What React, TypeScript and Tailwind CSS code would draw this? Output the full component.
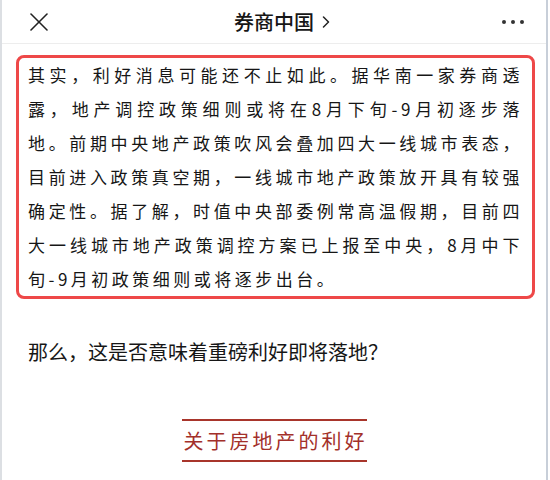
import React from 'react';

const boxLines = [
  '其实，利好消息可能还不止如此。据华南一家券商透',
  '露，地产调控政策细则或将在8月下旬-9月初逐步落',
  '地。前期中央地产政策吹风会叠加四大一线城市表态，',
  '目前进入政策真空期，一线城市地产政策放开具有较强',
  '确定性。据了解，时值中央部委例常高温假期，目前四',
  '大一线城市地产政策调控方案已上报至中央，8月中下',
];
const lastLine = '旬-9月初政策细则或将逐步出台。';

const cjk = { fontFamily: '"Noto Sans CJK SC", "Noto Sans", sans-serif' };

const App: React.FC = () => {
  return (
    <div className="w-[550px] h-[480px] bg-white flex overflow-hidden text-[#161616]" style={cjk}>
      <div className="w-[2px] bg-[#dcdfe3]" />
      <div className="flex-1 flex flex-col">
        {/* top bar */}
        <header className="h-[44px] shrink-0 border-b border-[#ededed] flex items-center">
          <div className="w-[100px] pl-[28px] flex items-center">
            <svg width="18" height="18" viewBox="0 0 18 18" fill="none" stroke="#222" strokeWidth="1.6" strokeLinecap="round">
              <line x1="1" y1="1" x2="17" y2="17" />
              <line x1="17" y1="1" x2="1" y2="17" />
            </svg>
          </div>
          <div className="flex-1 flex items-center justify-center pl-[16px]">
            <span className="text-[20px] font-medium leading-none">券商中国</span>
            <svg className="ml-[8px]" width="8" height="12" viewBox="0 0 8 12" fill="none" stroke="#222" strokeWidth="1.5" strokeLinecap="round" strokeLinejoin="round">
              <polyline points="1.5,1 6.5,6 1.5,11" />
            </svg>
          </div>
          <div className="w-[100px] pr-[22px] flex items-center justify-end gap-[5px]">
            <span className="w-[4px] h-[4px] rounded-full bg-[#333]" />
            <span className="w-[4px] h-[4px] rounded-full bg-[#333]" />
            <span className="w-[4px] h-[4px] rounded-full bg-[#333]" />
          </div>
        </header>

        {/* highlighted quote */}
        <div className="mt-[11px] ml-[14px] w-[519px] border-[3px] border-[#ee4848] rounded-[8px] pl-[9px]">
          <div className="w-[495px] text-[17px] tracking-[3.5px]">
            {boxLines.map((line) => (
              <div key={line} className="h-[34px] leading-[34px] text-justify [text-align-last:justify] whitespace-nowrap">
                {line}
              </div>
            ))}
            <div className="h-[34px] leading-[34px]">{lastLine}</div>
          </div>
        </div>

        <p className="mt-[36px] ml-[26px] text-[20px] leading-[34px] whitespace-nowrap">那么，这是否意味着重磅利好即将落地？</p>

        <div className="mt-[50px] mx-auto w-[185px] h-[43px] shrink-0 border-y-[2.5px] border-[#a8352b] flex items-center justify-center">
          <span className="text-[20px] tracking-[3px] text-[#a3302a] leading-none whitespace-nowrap pl-[3px]">关于房地产的利好</span>
        </div>
      </div>
      <div className="w-[2px] bg-[#c8cfd9]" />
      <div className="w-[2px] bg-white" />
    </div>
  );
};

export default App;
